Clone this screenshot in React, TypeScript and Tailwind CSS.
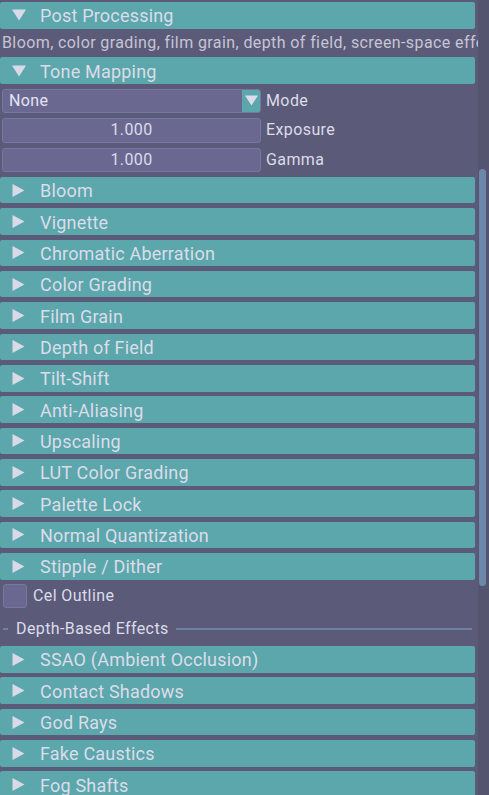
import React from 'react';

const font = { fontFamily: 'Roboto, "Noto Sans", sans-serif' };

const ArrowDown: React.FC = () => (
  <svg width="14" height="12" viewBox="0 0 14 12" className="shrink-0">
    <polygon points="0,0.5 14,0.5 7,11.5" fill="#d9d9e8" />
  </svg>
);

const ArrowRight: React.FC = () => (
  <svg width="13" height="13" viewBox="0 0 13 13" className="shrink-0">
    <polygon points="0.5,0 12.5,6.5 0.5,13" fill="#d9d9e8" />
  </svg>
);

const Header: React.FC<{ label: string; open?: boolean }> = ({ label, open }) => (
  <div className="h-[26.5px] w-[475px] shrink-0 rounded-[2px] bg-[#5ba7ab] flex items-center pl-[12px]">
    {open ? <ArrowDown /> : <ArrowRight />}
    <span
      className={`${open ? 'ml-[14px]' : 'ml-[15px]'} pt-[2px] text-[18px] tracking-[0.2px] leading-none text-[#dcdcea]`}
    >
      {label}
    </span>
  </div>
);

const labelCls = 'text-[16px] tracking-[0.4px] text-[#dcdcea] whitespace-nowrap';

const SliderRow: React.FC<{ value: string; label: string }> = ({ value, label }) => (
  <div className="h-[24.6px] shrink-0 flex items-center">
    <div
      className={`ml-[2px] w-[259px] h-full rounded-[3px] border border-[#7579a2] bg-[#6a6890] flex items-center justify-center ${labelCls}`}
    >
      {value}
    </div>
    <span className={`ml-[5px] ${labelCls}`}>{label}</span>
  </div>
);

const closedTop = [
  'Bloom',
  'Vignette',
  'Chromatic Aberration',
  'Color Grading',
  'Film Grain',
  'Depth of Field',
  'Tilt-Shift',
  'Anti-Aliasing',
  'Upscaling',
  'LUT Color Grading',
  'Palette Lock',
  'Normal Quantization',
  'Stipple / Dither',
];

const depthBased = ['SSAO (Ambient Occlusion)', 'Contact Shadows', 'God Rays', 'Fake Caustics', 'Fog Shafts'];

export default function App() {
  return (
    <div className="w-[489px] h-[795px] overflow-hidden bg-[#5b5a78] flex" style={font}>
      <div className="flex-1 min-w-0 overflow-hidden flex flex-col gap-[4.85px] pt-[2px]">
        <Header label="Post Processing" open />
        <div className="h-[19.1px] shrink-0 pl-[2px] whitespace-nowrap overflow-hidden text-[16px] tracking-[0.4px] leading-[19px] text-[#c6c5d4]">
          Bloom, color grading, film grain, depth of field, screen-space effects
        </div>
        <Header label="Tone Mapping" open />

        {/* Mode combo */}
        <div className="h-[24.6px] shrink-0 flex items-center">
          <div className="ml-[2px] w-[259px] h-full rounded-[3px] border border-[#7579a2] bg-[#6a6890] flex items-center overflow-hidden">
            <span className={`flex-1 pl-[6px] ${labelCls} text-[#e4e4f0]`}>None</span>
            <div className="w-[18px] h-full bg-[#5ba7ab] flex items-center justify-center">
              <svg width="13" height="11" viewBox="0 0 13 11">
                <polygon points="0,0.5 13,0.5 6.5,10.5" fill="#dcdcea" />
              </svg>
            </div>
          </div>
          <span className={`ml-[5px] ${labelCls}`}>Mode</span>
        </div>
        <SliderRow value="1.000" label="Exposure" />
        <SliderRow value="1.000" label="Gamma" />

        {closedTop.map((l) => (
          <Header key={l} label={l} />
        ))}

        {/* Cel Outline checkbox */}
        <div className="h-[24px] shrink-0 flex items-center">
          <div className="ml-[3px] w-[24px] h-[24px] rounded-[3px] border border-[#7579a2] bg-[#6a6890]" />
          <span className={`ml-[6px] ${labelCls}`}>Cel Outline</span>
        </div>

        {/* Separator text */}
        <div className="h-[28px] shrink-0 flex items-center pt-[4px]">
          <div className="ml-[3px] w-[5px] h-[2px] bg-[#6c80a6]" />
          <span className={`ml-[8px] ${labelCls}`}>Depth-Based Effects</span>
          <div className="ml-[7px] flex-1 mr-[6px] h-[2px] bg-[#6c80a6]" />
        </div>

        {depthBased.map((l) => (
          <Header key={l} label={l} />
        ))}
      </div>

      {/* Scrollbar */}
      <div className="w-[11.3px] h-full shrink-0 bg-[#55546e] flex flex-col">
        <div className="mt-[169px] ml-[1.6px] w-[6.8px] h-[417px] rounded-full bg-[#6b87a9]" />
      </div>
    </div>
  );
}
